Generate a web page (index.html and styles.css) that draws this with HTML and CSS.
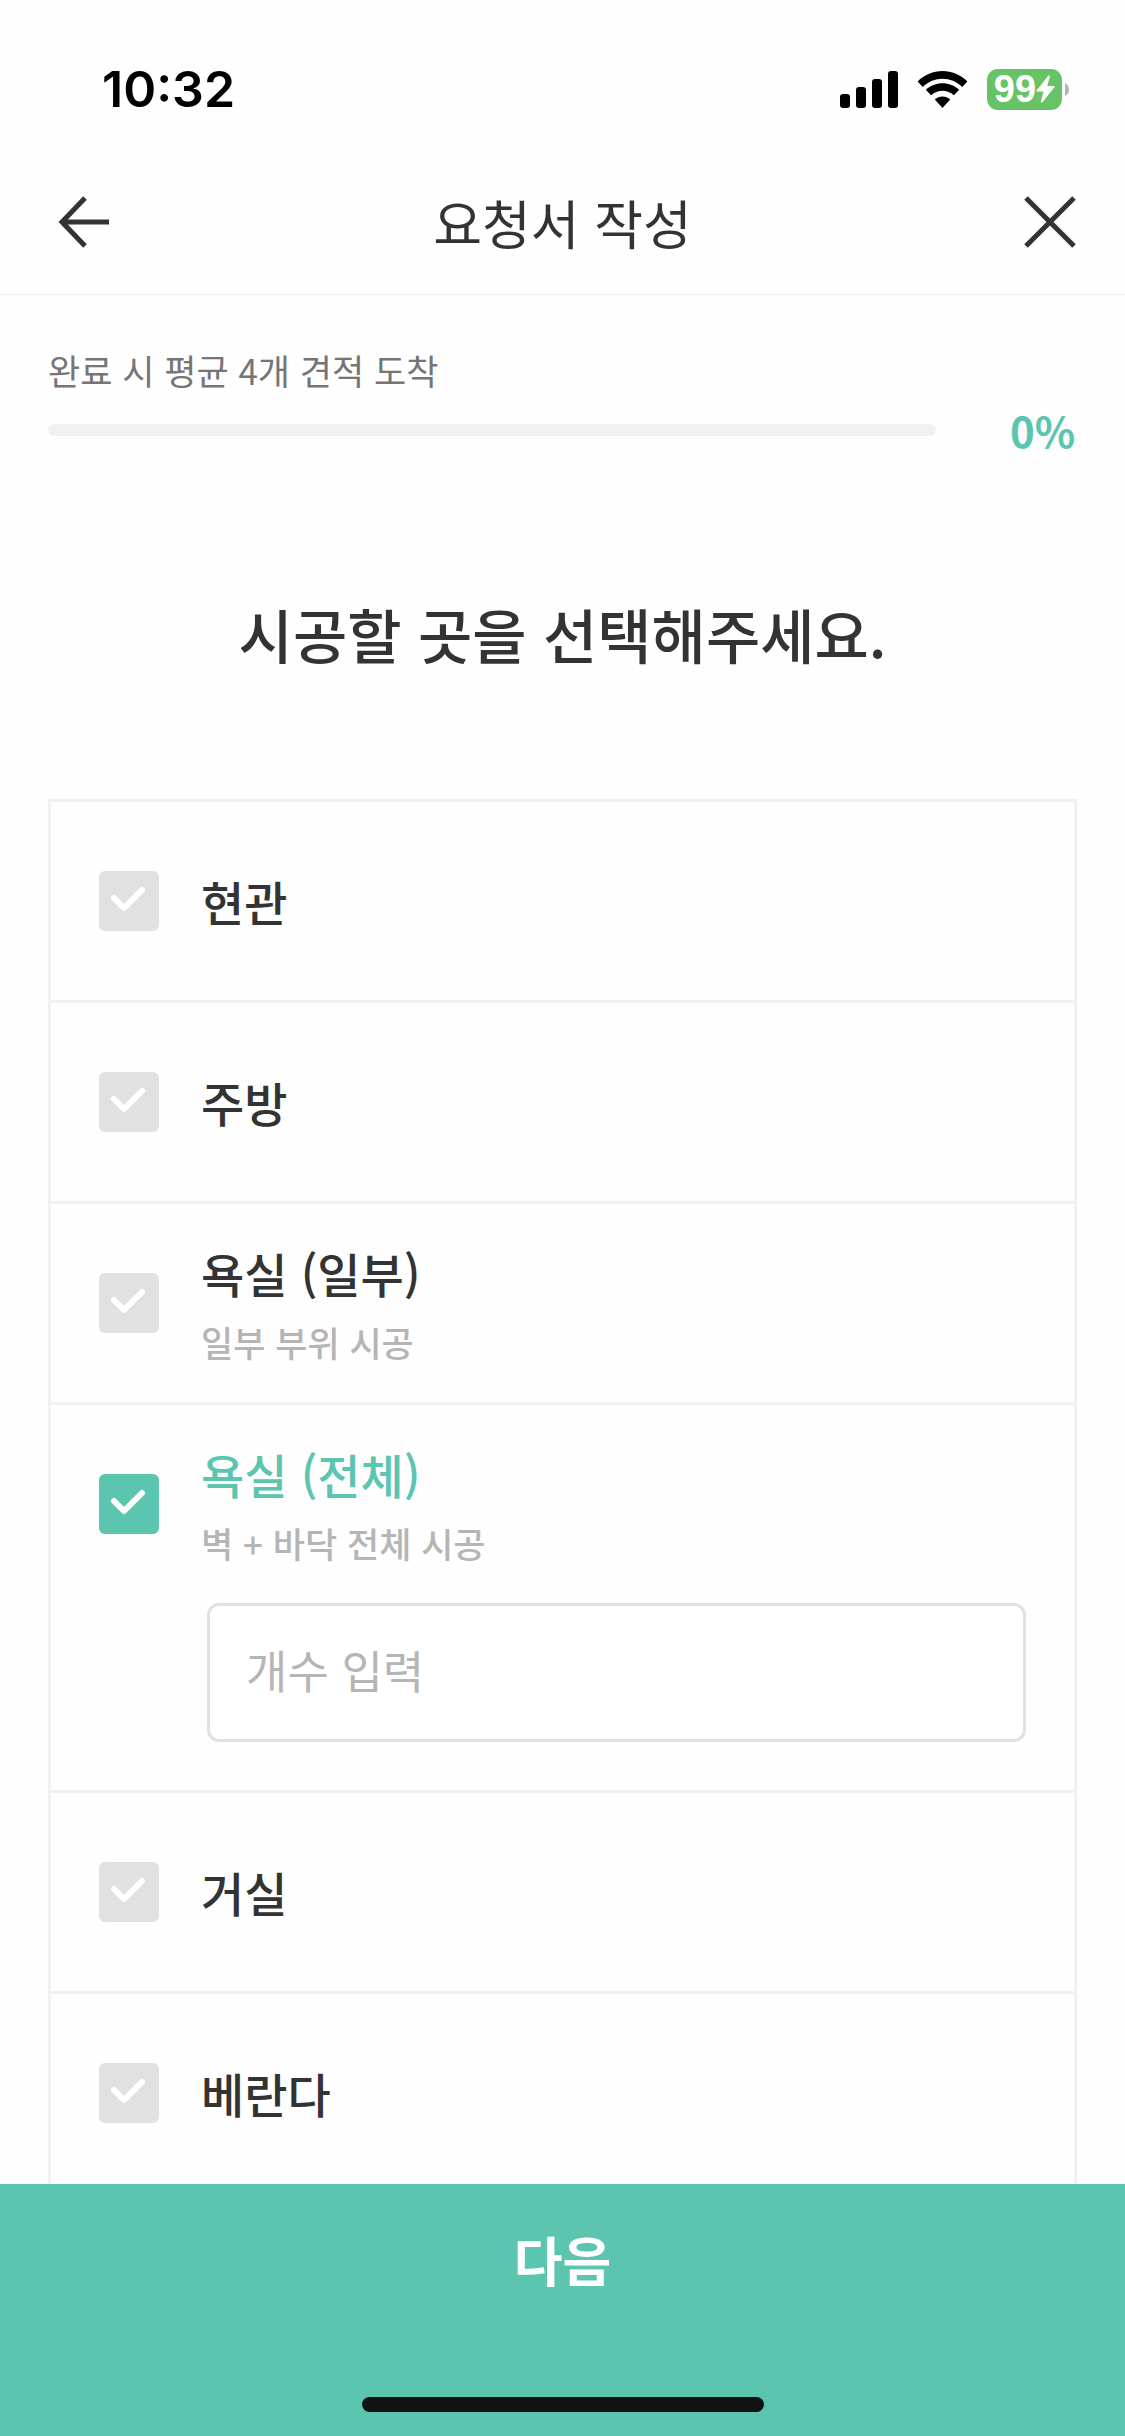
FILE: index.html
```html
<!DOCTYPE html>
<html lang="ko">
<head>
<meta charset="utf-8">
<meta name="viewport" content="width=device-width, initial-scale=1">
<title>요청서 작성</title>
<link rel="stylesheet" href="styles.css">
</head>
<body>
<div class="status-bar">
  <span class="status-time">10:32</span>
  <div class="status-icons">
    <svg class="signal" width="58" height="37" viewBox="0 0 58 37" aria-hidden="true">
      <rect x="0" y="23" width="10" height="14" rx="3"/>
      <rect x="16" y="16" width="10" height="21" rx="3"/>
      <rect x="32" y="8" width="10" height="29" rx="3"/>
      <rect x="48" y="0" width="10" height="37" rx="3"/>
    </svg>
    <svg class="wifi" width="51" height="37" viewBox="0 0 51 37" aria-hidden="true">
      <path d="M0.6 10.6C14-3.5 37-3.5 50.4 10.6L45.2 16C34.5 5 16.500 5 5.800 16Z"/>
      <path d="M8.800 18.800C18 9.900 33 9.900 42.200 18.800L36.900 24.300C30.500 18.200 20.500 18.200 14.100 24.300Z"/>
      <path d="M17.800 28.600C22 24.300 29 24.300 33.200 28.600L25.500 37Z"/>
    </svg>
    <div class="battery">
      <div class="battery-body">
        <span>99</span>
        <svg width="19" height="28" viewBox="0 0 19 28" aria-hidden="true"><path d="M12.500 0.500L0.500 15.500Q0 16.500 1 16.500H7.500L4.800 26.500Q5 28 6.500 27.200L18.600 12Q19 11 18 11H11.200L14 1.500Q14 0 12.500 0.500Z"/></svg>
      </div>
      <svg class="battery-cap" width="4" height="13" viewBox="0 0 4 13" aria-hidden="true"><path d="M0 0Q4 2 4 6.500T0 13Z"/></svg>
    </div>
  </div>
</div>

<header class="app-header">
  <button class="icon-button" type="button" aria-label="뒤로">
    <svg width="75" height="60" viewBox="0 0 75 60" aria-hidden="true"><path d="M40 6L17 30L40 54M17 30H64"/></svg>
  </button>
  <h1 class="app-title">요청서 작성</h1>
  <button class="icon-button" type="button" aria-label="닫기">
    <svg width="75" height="60" viewBox="0 0 75 60" aria-hidden="true"><path d="M21 6L69 54M69 6L21 54"/></svg>
  </button>
</header>

<main class="content">
  <section class="progress">
    <label class="progress-label" for="progress">완료 시 평균 4개 견적 도착</label>
    <div class="progress-row">
      <progress class="progress-bar" id="progress" value="0" max="100"></progress>
      <span class="progress-value">0%</span>
    </div>
  </section>

  <h2 class="question">시공할 곳을 선택해주세요.</h2>

  <ul class="options">
    <li class="option">
      <label class="option-label">
        <span class="tick"><input type="checkbox"><svg viewBox="0 0 60 60" aria-hidden="true"><path d="M15 27L25 37L43 19"/></svg></span>
        <span class="option-text"><span class="option-name">현관</span></span>
      </label>
    </li>
    <li class="option">
      <label class="option-label">
        <span class="tick"><input type="checkbox"><svg viewBox="0 0 60 60" aria-hidden="true"><path d="M15 27L25 37L43 19"/></svg></span>
        <span class="option-text"><span class="option-name">주방</span></span>
      </label>
    </li>
    <li class="option">
      <label class="option-label">
        <span class="tick"><input type="checkbox"><svg viewBox="0 0 60 60" aria-hidden="true"><path d="M15 27L25 37L43 19"/></svg></span>
        <span class="option-text"><span class="option-name">욕실 (일부)</span><span class="option-note">일부 부위 시공</span></span>
      </label>
    </li>
    <li class="option">
      <label class="option-label">
        <span class="tick"><input type="checkbox" checked><svg viewBox="0 0 60 60" aria-hidden="true"><path d="M15 27L25 37L43 19"/></svg></span>
        <span class="option-text"><span class="option-name">욕실 (전체)</span><span class="option-note">벽 + 바닥 전체 시공</span></span>
      </label>
      <div class="option-detail">
        <input class="count-input" type="text" inputmode="numeric" placeholder="개수 입력" aria-label="개수 입력">
      </div>
    </li>
    <li class="option">
      <label class="option-label">
        <span class="tick"><input type="checkbox"><svg viewBox="0 0 60 60" aria-hidden="true"><path d="M15 27L25 37L43 19"/></svg></span>
        <span class="option-text"><span class="option-name">거실</span></span>
      </label>
    </li>
    <li class="option">
      <label class="option-label">
        <span class="tick"><input type="checkbox"><svg viewBox="0 0 60 60" aria-hidden="true"><path d="M15 27L25 37L43 19"/></svg></span>
        <span class="option-text"><span class="option-name">베란다</span></span>
      </label>
    </li>
  </ul>
</main>

<footer class="footer">
  <button class="next-button" type="button">다음</button>
  <div class="home-indicator"></div>
</footer>
</body>
</html>
```

FILE: styles.css
```css
:root {
  --accent: #5cc5af;
  --ink: #333333;
  --muted: #757575;
  --faint: #b5b5b5;
  --line: #f1f1f1;
  --box: #e1e1e1;
}

* {
  box-sizing: border-box;
}

body {
  margin: 0;
  height: 100vh;
  display: flex;
  flex-direction: column;
  background: #fefefe;
  color: var(--ink);
  font-family: "Noto Sans CJK KR", sans-serif;
}

button,
input {
  font-family: inherit;
}

button {
  border: 0;
  padding: 0;
  background: none;
  cursor: pointer;
}

h1,
h2,
ul {
  margin: 0;
  padding: 0;
}

/* Status bar */

.status-bar {
  flex: none;
  display: flex;
  justify-content: space-between;
  align-items: center;
  padding: 60px 56px 0 102px;
  color: #000;
}

.status-time {
  font: 600 50px/58px Inter, sans-serif;
}

.status-icons {
  display: flex;
  align-items: center;
  gap: 19px;
}

.battery {
  display: flex;
  align-items: center;
  gap: 3px;
}

.battery-body {
  display: flex;
  align-items: center;
  justify-content: center;
  width: 75px;
  height: 41px;
  border-radius: 11px;
  background: #66c466;
  color: #fff;
  fill: #fff;
  font: 700 38px/41px "Liberation Sans", sans-serif;
}

.battery-cap {
  fill: #b5b5b5;
}

/* Header */

.app-header {
  flex: none;
  display: flex;
  align-items: center;
  justify-content: space-between;
  height: 177px;
  padding: 31px 45px 0;
  border-bottom: 1px solid #eeeeee;
}

.icon-button {
  height: 60px;
}

.icon-button svg {
  display: block;
  fill: none;
  stroke: var(--ink);
  stroke-width: 5;
}

.app-title {
  font-size: 53px;
  font-weight: 400;
  line-height: 78px;
}

/* Content */

.content {
  flex: 1;
  min-height: 0;
  overflow-y: auto;
  scrollbar-width: none;
  padding: 48px 48px 0;
}

.progress-label {
  display: block;
  color: var(--muted);
  font-size: 35px;
  line-height: 54px;
}

.progress-row {
  display: flex;
  align-items: center;
  justify-content: space-between;
}

.progress-bar {
  appearance: none;
  flex: 1;
  height: 12px;
  margin-right: 72px;
  border: 0;
  border-radius: 6px;
  background: var(--line);
  overflow: hidden;
}

.progress-bar::-webkit-progress-bar {
  background: var(--line);
}

.progress-bar::-webkit-progress-value {
  background: var(--accent);
}

.progress-value {
  min-width: 69px;
  color: var(--accent);
  font-size: 42px;
  font-weight: 700;
  line-height: 66px;
  text-align: center;
}

.question {
  padding: 126px 0 120px;
  font-size: 59px;
  font-weight: 500;
  line-height: 90px;
  text-align: center;
}

/* Options */

.options {
  list-style: none;
  border: 3px solid var(--line);
}

.option + .option {
  border-top: 3px solid var(--line);
}

.option-label {
  display: flex;
  align-items: center;
  gap: 42px;
  min-height: 198px;
  padding: 0 48px;
}

.tick {
  flex: none;
  display: grid;
  width: 60px;
  height: 60px;
}

.tick input,
.tick svg {
  grid-area: 1 / 1;
  width: 60px;
  height: 60px;
  margin: 0;
}

.tick input {
  appearance: none;
  border-radius: 6px;
  background: var(--box);
}

.tick svg {
  z-index: 1;
  pointer-events: none;
  fill: none;
  stroke: #fff;
  stroke-width: 6;
  stroke-linecap: round;
  stroke-linejoin: round;
}

.tick input:checked {
  background: var(--accent);
}

.option-text {
  display: flex;
  flex-direction: column;
  gap: 6px;
}

.option-name {
  font-size: 47px;
  font-weight: 500;
  line-height: 72px;
}

.option-label:has(input:checked) .option-name {
  color: var(--accent);
}

.option-note {
  color: var(--faint);
  font-size: 35px;
  font-weight: 500;
  line-height: 54px;
}

.option-detail {
  padding: 0 48px 48px 156px;
}

.count-input {
  display: block;
  width: 100%;
  height: 139px;
  padding: 0 36px 6px;
  border: 3px solid var(--box);
  border-radius: 12px;
  background: #fff;
  color: var(--ink);
  font-size: 45px;
}

.count-input::placeholder {
  color: var(--faint);
  opacity: 1;
}

/* Footer */

.footer {
  flex: none;
  display: flex;
  flex-direction: column;
  align-items: center;
  gap: 63px;
  padding-bottom: 24px;
  background: var(--accent);
}

.next-button {
  width: 100%;
  height: 150px;
  color: #fff;
  font-size: 53px;
  font-weight: 700;
}

.home-indicator {
  width: 402px;
  height: 15px;
  border-radius: 8px;
  background: #121212;
}
```
